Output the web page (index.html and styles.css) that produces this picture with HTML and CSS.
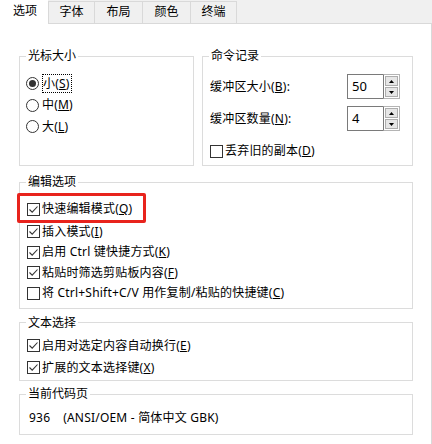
FILE: index.html
```html
<!DOCTYPE html>
<html lang="zh-CN">
<head>
<meta charset="utf-8">
<title>属性</title>
<link rel="stylesheet" href="styles.css">
</head>
<body>
<div class="tabbar">
  <div class="tab active">选项</div>
  <div class="tab t1">字体</div>
  <div class="tab t2">布局</div>
  <div class="tab t3">颜色</div>
  <div class="tab t4">终端</div>
  <div class="tab-fill"></div>
</div>
<div class="panel">
  <div class="row">
    <fieldset class="grp grp-cursor">
      <legend>光标大小</legend>
      <div class="radios">
        <label class="opt">
          <svg class="radio" width="13" height="13" viewBox="0 0 13 13"><circle cx="6.5" cy="6.5" r="6" fill="#fff" stroke="#333"/><circle cx="6.5" cy="6.5" r="3.5" fill="#333"/></svg>
          <span class="focus">小(<u>S</u>)</span>
        </label>
        <label class="opt">
          <svg class="radio" width="13" height="13" viewBox="0 0 13 13"><circle cx="6.5" cy="6.5" r="6" fill="#fff" stroke="#333"/></svg>
          <span class="txt">中(<u>M</u>)</span>
        </label>
        <label class="opt">
          <svg class="radio" width="13" height="13" viewBox="0 0 13 13"><circle cx="6.5" cy="6.5" r="6" fill="#fff" stroke="#333"/></svg>
          <span class="txt">大(<u>L</u>)</span>
        </label>
      </div>
    </fieldset>
    <fieldset class="grp grp-history">
      <legend>命令记录</legend>
      <div class="spin-row">
        <span>缓冲区大小(<u>B</u>):</span>
        <div class="spin">
          <span class="spin-val">50</span>
          <div class="spin-btns">
            <span class="sb"><svg width="7" height="4" viewBox="0 0 7 4"><path d="M3.5 0 L7 4 L0 4 Z" fill="#000"/></svg></span>
            <span class="sb"><svg width="7" height="4" viewBox="0 0 7 4"><path d="M0 0 L7 0 L3.5 4 Z" fill="#000"/></svg></span>
          </div>
        </div>
      </div>
      <div class="spin-row second">
        <span>缓冲区数量(<u>N</u>):</span>
        <div class="spin">
          <span class="spin-val">4</span>
          <div class="spin-btns">
            <span class="sb"><svg width="7" height="4" viewBox="0 0 7 4"><path d="M3.5 0 L7 4 L0 4 Z" fill="#000"/></svg></span>
            <span class="sb"><svg width="7" height="4" viewBox="0 0 7 4"><path d="M0 0 L7 0 L3.5 4 Z" fill="#000"/></svg></span>
          </div>
        </div>
      </div>
      <label class="opt chk-row discard">
        <svg class="check" width="13" height="13" viewBox="0 0 13 13"><rect x="0.5" y="0.5" width="12" height="12" fill="#fff" stroke="#333"/></svg>
        <span class="txt">丢弃旧的副本(<u>D</u>)</span>
      </label>
    </fieldset>
  </div>

  <fieldset class="grp grp-edit">
    <legend>编辑选项</legend>
    <label class="opt chk-row first">
      <svg class="check" width="13" height="13" viewBox="0 0 13 13"><rect x="0.5" y="0.5" width="12" height="12" fill="#fff" stroke="#333"/><path d="M2.5 6.5 L5.2 9.2 L10.5 3.5" fill="none" stroke="#333" stroke-width="1.1"/></svg>
      <span class="txt hl">快速编辑模式(<u>Q</u>)</span>
    </label>
    <label class="opt chk-row">
      <svg class="check" width="13" height="13" viewBox="0 0 13 13"><rect x="0.5" y="0.5" width="12" height="12" fill="#fff" stroke="#333"/><path d="M2.5 6.5 L5.2 9.2 L10.5 3.5" fill="none" stroke="#333" stroke-width="1.1"/></svg>
      <span class="txt">插入模式(<u>I</u>)</span>
    </label>
    <label class="opt chk-row">
      <svg class="check" width="13" height="13" viewBox="0 0 13 13"><rect x="0.5" y="0.5" width="12" height="12" fill="#fff" stroke="#333"/><path d="M2.5 6.5 L5.2 9.2 L10.5 3.5" fill="none" stroke="#333" stroke-width="1.1"/></svg>
      <span class="txt">启用 Ctrl 键快捷方式(<u>K</u>)</span>
    </label>
    <label class="opt chk-row">
      <svg class="check" width="13" height="13" viewBox="0 0 13 13"><rect x="0.5" y="0.5" width="12" height="12" fill="#fff" stroke="#333"/><path d="M2.5 6.5 L5.2 9.2 L10.5 3.5" fill="none" stroke="#333" stroke-width="1.1"/></svg>
      <span class="txt">粘贴时筛选剪贴板内容(<u>F</u>)</span>
    </label>
    <label class="opt chk-row">
      <svg class="check" width="13" height="13" viewBox="0 0 13 13"><rect x="0.5" y="0.5" width="12" height="12" fill="#fff" stroke="#333"/></svg>
      <span class="txt">将 Ctrl+Shift+C/V 用作复制/粘贴的快捷键(<u>C</u>)</span>
    </label>
  </fieldset>

  <fieldset class="grp grp-select">
    <legend>文本选择</legend>
    <label class="opt chk-row tall">
      <svg class="check" width="13" height="13" viewBox="0 0 13 13"><rect x="0.5" y="0.5" width="12" height="12" fill="#fff" stroke="#333"/><path d="M2.5 6.5 L5.2 9.2 L10.5 3.5" fill="none" stroke="#333" stroke-width="1.1"/></svg>
      <span class="txt">启用对选定内容自动换行(<u>E</u>)</span>
    </label>
    <label class="opt chk-row tall">
      <svg class="check" width="13" height="13" viewBox="0 0 13 13"><rect x="0.5" y="0.5" width="12" height="12" fill="#fff" stroke="#333"/><path d="M2.5 6.5 L5.2 9.2 L10.5 3.5" fill="none" stroke="#333" stroke-width="1.1"/></svg>
      <span class="txt">扩展的文本选择键(<u>X</u>)</span>
    </label>
  </fieldset>

  <fieldset class="grp grp-code">
    <legend>当前代码页</legend>
    <div class="codepage"><span>936</span><span class="cp-name">(ANSI/OEM - 简体中文 GBK)</span></div>
  </fieldset>
</div>
</body>
</html>
```

FILE: styles.css
```css
* { box-sizing: border-box; }

html, body {
  margin: 0;
  padding: 0;
}

body {
  width: 432px;
  height: 444px;
  overflow: hidden;
  background: #f0f0f0;
  color: #000;
  font-family: "Noto Sans", "Noto Sans CJK SC", "Microsoft YaHei", sans-serif;
  font-size: 12px;
  line-height: 16px;
}

.txt, .spin-row > span, .codepage { letter-spacing: 0.2px; }

u {
  text-decoration: underline;
  text-underline-offset: 1px;
  text-decoration-thickness: 1px;
}

/* Tabs */
.tabbar {
  display: flex;
  height: 24px;
  background: #f0f0f0;
}

.tab {
  height: 23px;
  margin-top: 1px;
  border: 1px solid #d9d9d9;
  border-right: none;
  display: flex;
  align-items: center;
  justify-content: center;
  padding-bottom: 1px;
}

.tab.active {
  width: 48px;
  height: 24px;
  margin-top: 0;
  border: none;
  background: #fff;
  padding-bottom: 2px;
  padding-left: 2px;
}

.t1 { width: 46px; }
.t2 { width: 48px; }
.t3 { width: 48px; }
.t4 { width: 47px; border-right: 1px solid #d9d9d9; }

.tab-fill {
  flex: 1;
  height: 24px;
  border-bottom: 1px solid #d9d9d9;
}

/* Panel */
.panel {
  height: 420px;
  background: #fff;
  border-right: 1px solid #d9d9d9;
  padding: 24px 18px 0 19px;
}

.row {
  display: flex;
  gap: 8px;
}

.grp {
  margin: 0;
  padding: 0 6px;
  border: 1px solid #dcdcdc;
  min-width: 0;
}

.grp legend {
  padding: 0 2px;
  line-height: 16px;
}

.grp-cursor { width: 175px; height: 118px; }
.grp-history { width: 211px; height: 118px; }

.radios { padding-top: 9px; }

.opt {
  display: flex;
  align-items: center;
  height: 21.5px;
}

.radio { flex: none; margin-right: 3px; }
.check { flex: none; margin-left: 1px; margin-right: 2px; }

.focus {
  border: 1px dotted #000;
  padding: 0 1px 0 0;
  height: 19px;
  line-height: 17px;
  letter-spacing: 0.2px;
}

.txt { line-height: 16px; }

/* Spin boxes */
.spin-row {
  display: flex;
  align-items: center;
  justify-content: space-between;
  height: 25px;
  margin-top: 10px;
  padding-left: 1px;
}

.spin-row.second { margin-top: 7px; }

.spin {
  display: flex;
  width: 53px;
  height: 25px;
  margin-right: 6px;
}

.spin-val {
  flex: 1;
  border: 1px solid #7a7a7a;
  border-right: none;
  padding-left: 4px;
  line-height: 22px;
  font-size: 13px;
}

.spin-btns {
  width: 17px;
  display: flex;
  flex-direction: column;
  border: 1px solid #b4b4b4;
  border-left: 1px solid #7a7a7a;
  background: #fff;
  padding: 1px;
  gap: 1px;
}

.sb {
  flex: 1;
  background: #e6e6e6;
  border: 1px solid #adadad;
  display: flex;
  align-items: center;
  justify-content: center;
}

.sb svg { width: 5px; height: 3px; }

.chk-row { height: 20.5px; }
.chk-row.discard { margin-top: 10px; }

/* Edit options */
.grp-edit {
  margin-top: 8px;
  padding-top: 9px;
  padding-bottom: 4px;
}

.chk-row.first { margin-bottom: 2px; }

.hl { position: relative; }
.hl::after {
  content: "";
  position: absolute;
  left: -25px;
  right: -14px;
  top: -8px;
  bottom: -6px;
  border: 3px solid #e8231d;
  border-radius: 2px;
}

/* Text selection */
.grp-select {
  margin-top: 6px;
  padding-top: 4px;
  padding-bottom: 1px;
}

.chk-row.tall { height: 22.3px; }

/* Code page */
.grp-code {
  margin-top: 5px;
  padding-top: 6px;
  padding-bottom: 6px;
}

.codepage {
  height: 20px;
  display: flex;
  align-items: center;
  padding-left: 3px;
}

.cp-name { margin-left: 13px; }
```
